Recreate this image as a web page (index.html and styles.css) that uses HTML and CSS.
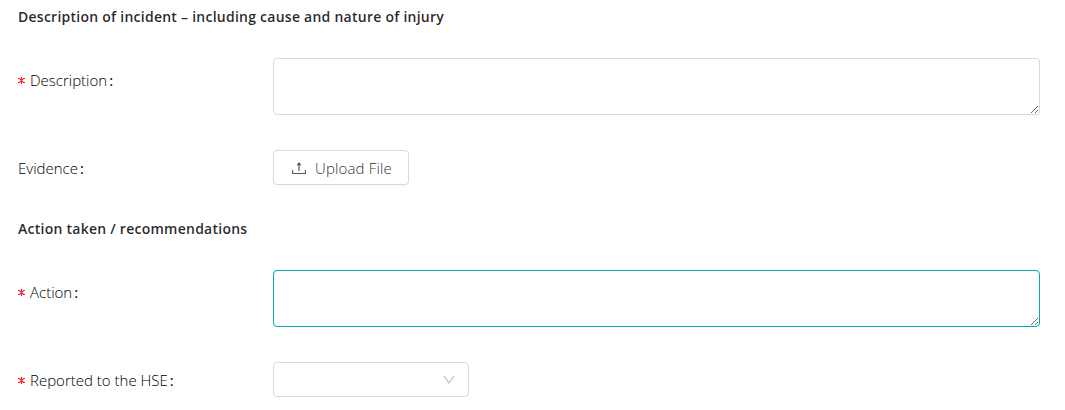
FILE: index.html
```html
<!DOCTYPE html>
<html lang="en">
	<head>
		<meta charset="utf-8">
		<meta name="viewport" content="width=device-width, initial-scale=1">
		<title>Incident report</title>
		<link rel="stylesheet" href="styles.css">
	</head>
	<body>
		<form class="report">
			<h2 class="section-title">Description of incident – including cause and nature of injury</h2>

			<div class="row row-area">
				<label class="label" for="description"><svg class="required" viewBox="0 0 8 7"><path d="M3.5 0v7M0 1.5h1.5l4 4H7M7 1.5H5.5l-4 4H0"/></svg><span class="text">Description</span><span class="colon">:</span></label>
				<textarea class="area" id="description"></textarea>
			</div>

			<div class="row">
				<span class="label"><span class="text">Evidence</span><span class="colon">:</span></span>
				<button class="upload" type="button">
					<svg class="upload-icon" viewBox="0 0 14 14"><path d="M.5 9v3.5h13V9M7 10V2.5"/><path class="head" d="M7 1 9.4 4.2H4.6z"/></svg>
					<span class="upload-text">Upload File</span>
				</button>
			</div>

			<h2 class="section-title">Action taken / recommendations</h2>

			<div class="row row-area">
				<label class="label" for="action"><svg class="required" viewBox="0 0 8 7"><path d="M3.5 0v7M0 1.5h1.5l4 4H7M7 1.5H5.5l-4 4H0"/></svg><span class="text">Action</span><span class="colon">:</span></label>
				<textarea class="area active" id="action"></textarea>
			</div>

			<div class="row">
				<span class="label"><svg class="required" viewBox="0 0 8 7"><path d="M3.5 0v7M0 1.5h1.5l4 4H7M7 1.5H5.5l-4 4H0"/></svg><span class="text">Reported to the HSE</span><span class="colon">:</span></span>
				<div class="select" tabindex="0">
					<svg class="arrow" viewBox="0 0 12 10"><path d="M1 1l5 7 5-7"/></svg>
				</div>
			</div>
		</form>
	</body>
</html>
```

FILE: styles.css
```css
* {
	box-sizing: border-box;
}
body {
	margin: 0;
	background: #fff;
	color: rgba(0, 0, 0, 0.85);
	font-family: "Open Sans", "Noto Sans", sans-serif;
	font-size: 15px;
	line-height: 22px;
}
.report {
	padding: 6px 25px 0 18px;
}
.section-title {
	margin: 0 0 30px;
	font-size: 14px;
	font-weight: 550;
	letter-spacing: 0.25px;
}
.row {
	display: flex;
	align-items: center;
	margin-bottom: 35px;
}
.row:last-child {
	margin-bottom: 0;
}
.row + .section-title {
	margin-top: -2px;
}
.row-area {
	align-items: flex-start;
}
.label {
	display: flex;
	align-items: center;
	flex: 0 0 255px;
	color: #000;
	font-weight: 350;
}
.row-area .label {
	padding-top: 11px;
}
.required {
	width: 8px;
	height: 7px;
	margin: 1px 4px 0 0;
	fill: none;
	stroke: #f5222d;
	stroke-width: 1.1;
}
.colon {
	margin-left: 2px;
	font-weight: 400;
}

.area {
	flex: 1;
	display: block;
	height: 57px;
	margin: 0;
	padding: 5px 12px;
	border: 1px solid #d9d9d9;
	border-radius: 4px;
	outline: none;
	font: inherit;
	resize: vertical;
}
.area.active {
	border-color: #00a8b0;
}
.upload {
	display: flex;
	align-items: center;
	width: 136px;
	height: 35px;
	padding: 0 0 0 18px;
	background: #fff;
	border: 1px solid #d9d9d9;
	border-radius: 4px;
	box-shadow: 0 2px 0 rgba(0, 0, 0, 0.015);
	color: rgba(0, 0, 0, 0.85);
	font: inherit;
	font-weight: 350;
}
.upload-text {
	letter-spacing: 0.15px;
}
.upload-icon {
	width: 14px;
	height: 14px;
	margin: 0 9px 0 0;
	fill: none;
	stroke: #555;
	stroke-width: 1.2;
}
.upload-icon .head {
	fill: #555;
	stroke: none;
}
.select {
	display: flex;
	align-items: center;
	justify-content: flex-end;
	width: 196px;
	height: 35px;
	padding-right: 13px;
	border: 1px solid #d9d9d9;
	border-radius: 4px;
}
.arrow {
	width: 12px;
	height: 10px;
	fill: none;
	stroke: #bfbfbf;
	stroke-width: 1.2;
}
```
